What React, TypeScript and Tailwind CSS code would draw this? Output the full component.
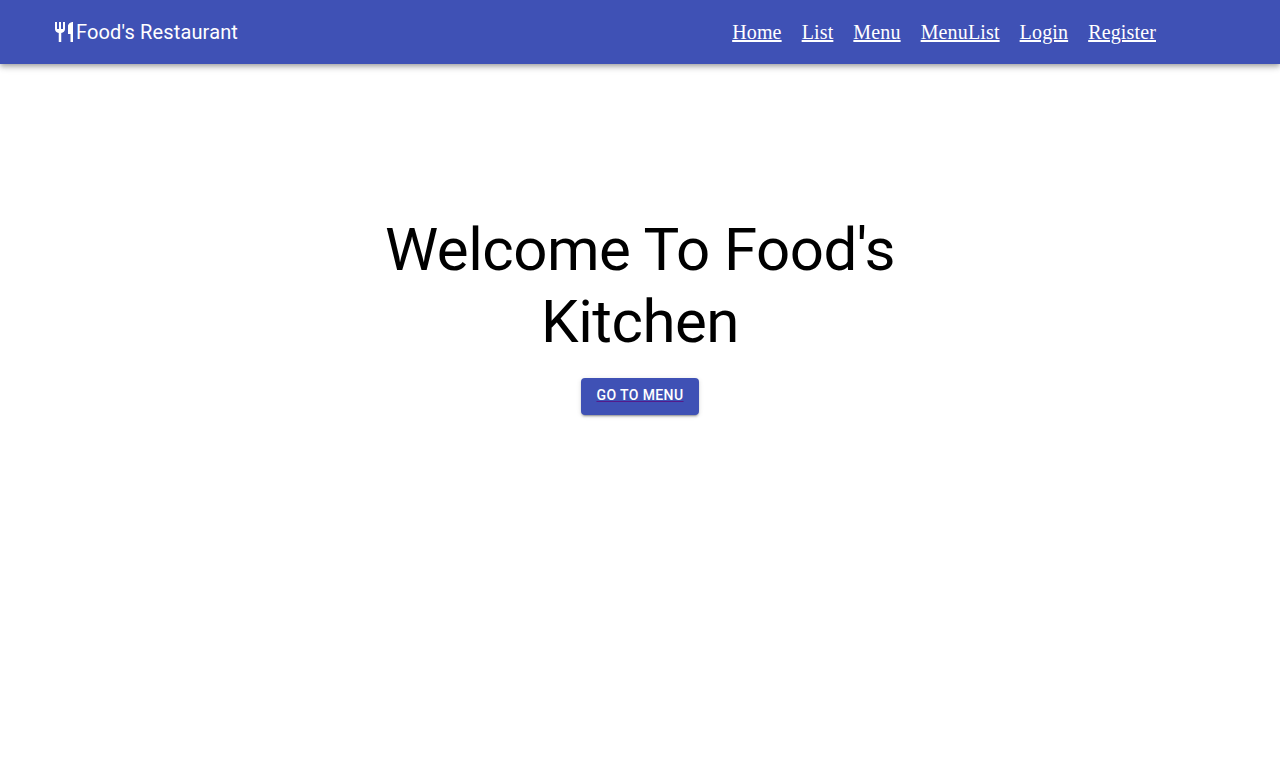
const links = ["Home", "List", "Menu", "MenuList", "Login", "Register"];

export default function App() {
  return (
    <div className="min-h-screen bg-white text-black">
      <header className="flex h-16 items-center bg-[#3f51b5] pr-[124px] pl-[52px] text-white shadow-[0px_2px_4px_-1px_rgba(0,0,0,0.2),0px_4px_5px_0px_rgba(0,0,0,0.14),0px_1px_10px_0px_rgba(0,0,0,0.12)]">
        <svg viewBox="0 0 24 24" className="size-6 shrink-0 fill-current" aria-hidden="true">
          <path d="M11 9H9V2H7v7H5V2H3v7c0 2.12 1.66 3.84 3.75 3.97V22h2.5v-9.03C11.34 12.84 13 11.12 13 9V2h-2v7zm5-3v8h2.5v8H21V2c-2.76 0-5 2.24-5 4z" />
        </svg>
        <h6 className="font-['Roboto',sans-serif] text-[20px] leading-8 font-normal tracking-[0.15px]">Food's Restaurant</h6>
        <nav className="ml-auto flex gap-5 font-['Liberation_Serif',serif] text-[20px] leading-6 tracking-[0.15px]">
          {links.map((link) => (
            <a key={link} href="#" className="underline decoration-2 underline-offset-1">{link}</a>
          ))}
        </nav>
      </header>
      <main className="mx-auto flex w-[600px] flex-col items-center pt-[150px]">
        <h1 className="text-center font-['Roboto',sans-serif] text-[60px] leading-[72px] tracking-[-0.5px]">
          Welcome To Food's Kitchen
        </h1>
        <button className="mt-5 h-[37px] w-[118px] rounded bg-[#3f51b5] pb-[3px] font-['Roboto',sans-serif] text-[14px] leading-6 font-medium tracking-[0.4px] text-white uppercase underline decoration-[#551a8b] decoration-1 underline-offset-1 shadow-[0px_3px_1px_-2px_rgba(0,0,0,0.2),0px_2px_2px_0px_rgba(0,0,0,0.14),0px_1px_5px_0px_rgba(0,0,0,0.12)]">
          Go to menu
        </button>
      </main>
    </div>
  );
}
